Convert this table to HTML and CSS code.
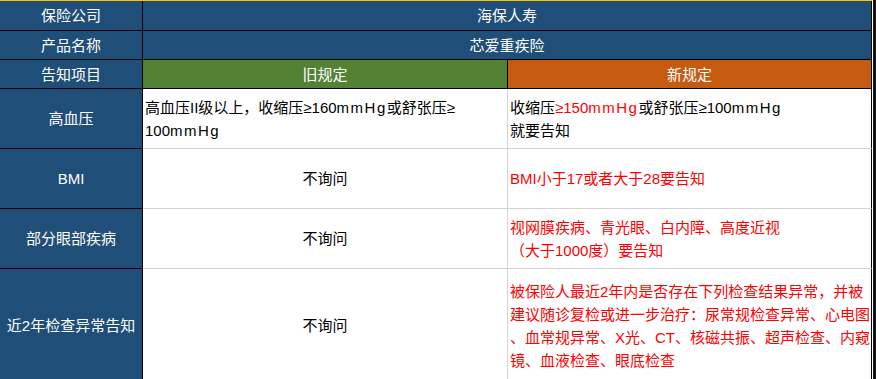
FILE: index.html
```html
<!DOCTYPE html>
<html lang="zh-CN">
<head>
<meta charset="utf-8">
<title>芯爱重疾险 告知对比</title>
<link rel="stylesheet" href="styles.css">
</head>
<body>
<div class="page">
  <div class="sheet">
    <div class="cell label">保险公司</div>
    <div class="cell head span">海保人寿</div>

    <div class="cell label">产品名称</div>
    <div class="cell head span">芯爱重疾险</div>

    <div class="cell label">告知项目</div>
    <div class="cell head old">旧规定</div>
    <div class="cell head new">新规定</div>

    <div class="cell label">高血压</div>
    <div class="cell body old-col"><p>高血压II级以上，收缩压≥160<span class="unit">mmHg</span>或舒张压≥<br>100<span class="unit">mmHg</span></p></div>
    <div class="cell body new-col"><p>收缩压<span class="red">≥150<span class="unit">mmHg</span></span>或舒张压≥100<span class="unit">mmHg</span><br>就要告知</p></div>

    <div class="cell label">BMI</div>
    <div class="cell body old-col center"><p>不询问</p></div>
    <div class="cell body new-col"><p class="red">BMI小于17或者大于28要告知</p></div>

    <div class="cell label">部分眼部疾病</div>
    <div class="cell body old-col center"><p>不询问</p></div>
    <div class="cell body new-col"><p class="red">视网膜疾病、青光眼、白内障、高度近视<br>（大于1000度）要告知</p></div>

    <div class="cell label last">近2年检查异常告知</div>
    <div class="cell body old-col center last"><p>不询问</p></div>
    <div class="cell body new-col last"><p class="red">被保险人最近2年内是否存在下列检查结果异常，并被<br>建议随诊复检或进一步治疗：尿常规检查异常、心电图<br>、血常规异常、X光、CT、核磁共振、超声检查、内窥<br>镜、血液检查、眼底检查</p></div>
  </div>
  <div class="gap"></div>
  <div class="edge"></div>
</div>
</body>
</html>
```

FILE: styles.css
```css
html, body {
  margin: 0;
  padding: 0;
  background: #ffffff;
}

body {
  font-family: "Liberation Sans", "Noto Sans CJK SC", sans-serif;
  font-size: 15px;
  color: #000000;
}

.page {
  display: flex;
  height: 379px;
  overflow: hidden;
}

.sheet {
  display: grid;
  grid-template-columns: 143px 365px 364px;
  grid-template-rows: 30px 29px 29px 60px 60px 60px 113px;
  border-top: 1px solid #ffc000;
  align-self: flex-start;
}

.gap {
  width: 1px;
  background: #ffffff;
}

.edge {
  width: 3px;
  background: #141414;
}

.cell {
  box-sizing: border-box;
  display: flex;
  align-items: center;
  border-right: 1px solid #000000;
  border-bottom: 1px solid #000000;
  line-height: 23px;
}

.cell p {
  margin: 0;
  white-space: nowrap;
}

.label {
  background: #1f4e79;
  color: #ffffff;
  justify-content: center;
}

.head {
  background: #1f4e79;
  color: #ffffff;
  justify-content: center;
}

.span {
  grid-column: 2 / 4;
}

.head.old {
  background: #548235;
}

.head.new {
  background: #c55a11;
}

.body {
  background: #ffffff;
  padding-left: 2px;
  border-bottom-color: #d4d4d4;
}

.old-col {
  border-right-color: #d4d4d4;
}

.new-col {
  border-right-color: #000000;
}

.center {
  justify-content: center;
  padding-left: 0;
}

.last {
  border-bottom: none;
}

.red {
  color: #ff0000;
}

.unit {
  letter-spacing: 1.5px;
}
```
